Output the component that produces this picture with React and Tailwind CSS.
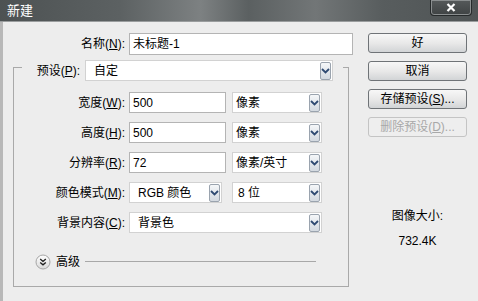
import React from 'react'

const Chevron = () => (
  <svg width="9" height="6" viewBox="0 0 9 6">
    <path d="M1 1 L4.5 4.5 L8 1" fill="none" stroke="#2f4a72" strokeWidth="1.8" />
  </svg>
)

const DropBtn = () => (
  <div className="flex h-[18px] w-[11px] shrink-0 items-center justify-center rounded-[2px] border border-[#9aa3ae] bg-gradient-to-b from-[#f5f7f9] to-[#d3d9e0]">
    <Chevron />
  </div>
)

const Select = ({ text, width, pad = 'pl-[8px]' }) => (
  <div className={`flex h-[21px] items-center border border-[#d2d2d2] bg-white pr-px ${width}`}>
    <span className={`flex-1 ${pad} text-[12px] leading-none text-black`}>{text}</span>
    <DropBtn />
  </div>
)

const Input = ({ text, width }) => (
  <div className={`flex h-[21px] items-center border border-[#b4b4b4] bg-white pl-[3px] text-[12px] text-black ${width}`}>
    {text}
  </div>
)

const Label = ({ name, k, width = 'w-[115px]' }) => (
  <div className={`${width} shrink-0 pr-[4px] text-right text-[12px] text-black`}>
    {name}(<span className="underline">{k}</span>):
  </div>
)

const Button = ({ children, disabled }) => (
  <div
    className={`flex h-[20px] items-center justify-center rounded-[3px] border text-[12px] ${
      disabled
        ? 'border-[#c4c4c4] bg-[#eeeeee] text-[#a8a8a8]'
        : 'border-[#6f7377] bg-gradient-to-b from-[#f7f7f7] via-[#e9e9e9] to-[#d2d4d6] text-black'
    }`}
  >
    {children}
  </div>
)

export default function App() {
  return (
    <div className="w-[478px] h-[301px] overflow-hidden bg-[#ededed] font-['Liberation_Sans','Noto_Sans_CJK_SC',sans-serif]">
      {/* title bar */}
      <div className="flex h-[22px] items-start justify-between border-b border-[#9a9d9e] bg-[linear-gradient(90deg,#4d5253_0%,#5c6162_25%,#7d8182_42%,#5b6061_52%,#727677_66%,#585d5e_80%,#4f5455_100%)]">
        <span className="pl-[7px] pt-[3px] text-[13px] leading-[15px] text-white">新建</span>
        <div className="mr-[6px] flex h-[16px] w-[42px] items-center justify-center rounded-b-[4px] border border-t-0 border-[#262a2b] bg-gradient-to-b from-[#55595a] to-[#3f4344] shadow-[inset_0_0_0_1px_#8a8e8f]">
          <svg width="10" height="9" viewBox="0 0 10 9">
            <path d="M1.5 1 L8.5 8 M8.5 1 L1.5 8" stroke="#ffffff" strokeWidth="2.2" />
          </svg>
        </div>
      </div>

      {/* body */}
      <div className="flex h-[279px] border-l-[3px] border-[#b8b8b8]">
        <div className="w-[350px] pt-[11px]">
          <div className="flex items-center">
            <Label name="名称" k="N" width="w-[126px]" />
            <Input text="未标题-1" width="w-[224px] h-[22px]" />
          </div>

          <fieldset className="-mt-px ml-[10px] w-[336px] border border-[#a9a9a9] pb-[17px]">
            <legend className="ml-[8px] flex items-center pr-[10px] pt-[6px]">
              <div className="w-[63px] pr-[5px] text-right text-[12px] text-black">
                预设(<span className="underline">P</span>):
              </div>
              <Select text="自定" width="w-[248px] h-[20px]" />
            </legend>

            <div className="mt-[11px] flex flex-col gap-[9px]">
              <div className="flex items-center">
                <Label name="宽度" k="W" />
                <Input text="500" width="w-[97px]" />
                <Select text="像素" width="ml-[6px] w-[90px]" pad="pl-[3px]" />
              </div>
              <div className="flex items-center">
                <Label name="高度" k="H" />
                <Input text="500" width="w-[97px]" />
                <Select text="像素" width="ml-[6px] w-[90px]" pad="pl-[3px]" />
              </div>
              <div className="flex items-center">
                <Label name="分辨率" k="R" />
                <Input text="72" width="w-[97px]" />
                <Select text="像素/英寸" width="ml-[6px] w-[90px]" pad="pl-[3px]" />
              </div>
              <div className="flex items-center">
                <Label name="颜色模式" k="M" />
                <Select text="RGB 颜色" width="w-[93px]" />
                <Select text="8 位" width="ml-[10px] w-[90px]" pad="pl-[5px]" />
              </div>
              <div className="flex items-center">
                <Label name="背景内容" k="C" />
                <Select text="背景色" width="w-[193px]" />
              </div>
            </div>

            <div className="ml-[21px] mt-[21px] flex h-[15px] items-center">
              <svg width="16" height="16" viewBox="0 0 16 16">
                <defs>
                  <linearGradient id="cg" x1="0" y1="0" x2="0" y2="1">
                    <stop offset="0" stopColor="#ffffff" />
                    <stop offset="1" stopColor="#d9d9d9" />
                  </linearGradient>
                </defs>
                <circle cx="8" cy="8" r="7" fill="url(#cg)" stroke="#a6a6a6" />
                <path d="M5.2 5 L8 7.4 L10.8 5 M5.2 8.4 L8 10.8 L10.8 8.4" fill="none" stroke="#1e1e1e" strokeWidth="1.3" />
              </svg>
              <span className="ml-[5px] text-[12px] text-black">高级</span>
              <div className="ml-[5px] mr-[32px] h-px flex-1 bg-[#a8a8a8]" />
            </div>
          </fieldset>
        </div>

        <div className="ml-[15px] flex w-[99px] flex-col pt-[11px]">
          <div className="flex flex-col gap-[8px]">
            <Button>好</Button>
            <Button>取消</Button>
            <Button>
              存储预设(<span className="underline">S</span>)...
            </Button>
            <Button disabled>
              删除预设(<span className="underline">D</span>)...
            </Button>
          </div>
          <div className="mt-[70px] text-center text-[12px] text-black">图像大小:</div>
          <div className="mt-[7px] text-center text-[12px] text-black">732.4K</div>
        </div>
      </div>
    </div>
  )
}
